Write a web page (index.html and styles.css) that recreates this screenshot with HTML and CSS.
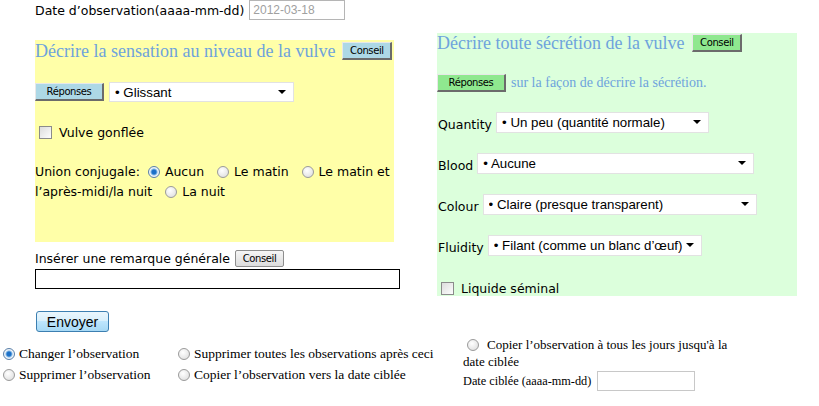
FILE: index.html
```html
<!DOCTYPE html>
<html lang="fr">
<head>
<meta charset="utf-8">
<title>Observation</title>
<link rel="stylesheet" href="styles.css">
</head>
<body>
<div class="top">
  <div class="left">
    <div class="date-row">
      <span class="lbl">Date d’observation(aaaa-mm-dd)</span>
      <input class="date-in" type="text" value="2012-03-18" readonly>
    </div>
    <div class="panel yellow">
      <div class="head-row">
        <span class="heading">Décrire la sensation au niveau de la vulve</span>
        <button class="btn blue conseil">Conseil</button>
      </div>
      <div class="rep-row">
        <button class="btn blue rep">Réponses</button>
        <span class="sel w185"><select><option>• Glissant</option></select><i class="arrow"></i></span>
      </div>
      <label class="check-row"><input type="checkbox" class="cb"><span>Vulve gonflée</span></label>
      <div class="union"><span class="ul">Union conjugale:</span> <span class="ro"><input type="radio" class="rd" checked><span>Aucun</span></span> <span class="ro"><input type="radio" class="rd"><span>Le matin</span></span> <span class="ro"><input type="radio" class="rd"><span>Le matin et</span></span> <span class="ro">l’après-midi/la nuit</span> <span class="ro"><input type="radio" class="rd"><span>La nuit</span></span></div>
    </div>
    <div class="remark-row">
      <span class="lbl">Insérer une remarque générale</span>
      <button class="btn gray">Conseil</button>
    </div>
    <input class="remark" type="text">
    <button class="envoyer">Envoyer</button>
  </div>
  <div class="right">
    <div class="panel green">
      <div class="head-row g">
        <span class="heading">Décrire toute sécrétion de la vulve</span>
        <button class="btn lg conseil">Conseil</button>
      </div>
      <div class="rep-row g">
        <button class="btn lg rep">Réponses</button>
        <span class="hint">sur la façon de décrire la sécrétion.</span>
      </div>
      <div class="field"><span class="lbl">Quantity</span><span class="sel w213"><select><option>• Un peu (quantité normale)</option></select><i class="arrow"></i></span></div>
      <div class="field"><span class="lbl">Blood</span><span class="sel w277"><select><option>• Aucune</option></select><i class="arrow"></i></span></div>
      <div class="field"><span class="lbl">Colour</span><span class="sel w274"><select><option>• Claire (presque transparent)</option></select><i class="arrow"></i></span></div>
      <div class="field"><span class="lbl">Fluidity</span><span class="sel w214"><select><option>• Filant (comme un blanc d’œuf)</option></select><i class="arrow"></i></span></div>
      <label class="check-row g"><input type="checkbox" class="cb"><span>Liquide séminal</span></label>
    </div>
  </div>
</div>
<div class="actions">
  <div class="col c1">
    <label class="opt"><input type="radio" class="rd" checked>Changer l’observation</label>
    <label class="opt"><input type="radio" class="rd">Supprimer l’observation</label>
  </div>
  <div class="col c2">
    <label class="opt"><input type="radio" class="rd">Supprimer toutes les observations après ceci</label>
    <label class="opt"><input type="radio" class="rd">Copier l’observation vers la date ciblée</label>
  </div>
  <div class="col c3">
    <div class="copy"><span class="l1"><input type="radio" class="rd">Copier l’observation à tous les jours jusqu'à la</span> <span class="l2">date ciblée</span></div>
    <div class="target">Date ciblée (aaaa-mm-dd) <input class="date-in t" type="text"></div>
  </div>
</div>
</body>
</html>
```
FILE: styles.css
```css
html, body { margin: 0; padding: 0; background: #fff; }
body { font-family: "DejaVu Sans", Verdana, sans-serif; font-size: 12.5px; color: #000; }

.top { display: flex; align-items: flex-start; }
.left { margin-left: 35px; width: 365px; }
.right { margin-left: 37px; padding-top: 33px; }

.lbl { font-family: "DejaVu Sans", Verdana, sans-serif; font-size: 12.5px; }

.date-row { display: flex; align-items: center; height: 20px; gap: 5px; }
.date-in { box-sizing: border-box; width: 96px; height: 20px; border: 1px solid #b5b5b5; padding: 0 3px; font-family: "Liberation Sans", Arial, sans-serif; font-size: 12px; color: #a0a0a0; outline: none; margin: 0; }

.panel { box-sizing: border-box; }
.yellow { background: #ffffa8; width: 359px; height: 202px; margin-top: 20px; padding-top: 2px; }
.green { background: #dcffdc; width: 360px; height: 263px; padding-top: 1px; }

.head-row { display: flex; align-items: center; height: 18px; gap: 7px; }
.head-row.g { gap: 8px; }
.heading { font-family: "Liberation Serif", "Times New Roman", serif; font-size: 18px; color: #6ea3dc; white-space: nowrap; }

.btn { box-sizing: border-box; font-family: "DejaVu Sans", Tahoma, sans-serif; font-size: 10px; letter-spacing: -0.4px; margin: 0; padding: 0; border-style: solid; border-width: 1px 2px 2px 1px; border-color: #e8e8e8 #6b6b6b #6b6b6b #e8e8e8; color: #000; }
.btn.blue { background: #add8e6; }
.btn.lg { background: #8fe88f; }
.conseil { width: 50px; height: 18px; }
.rep { width: 69px; height: 18px; }
.btn.gray { width: 49px; height: 17px; border: 1px solid #8e8e8e; border-radius: 2px; background: linear-gradient(#f6f6f6, #dcdcdc); }

.rep-row { display: flex; align-items: center; gap: 5px; margin-top: 22px; height: 20px; }
.rep-row.g { margin-top: 22px; height: 18px; }
.hint { font-family: "Liberation Serif", "Times New Roman", serif; font-size: 14px; color: #6ea3dc; }

.field { display: flex; align-items: center; gap: 4px; margin-top: 20px; height: 21px; padding-left: 1px; }
.field .lbl { padding-top: 4px; }

.sel { position: relative; display: inline-block; height: 21px; }
.sel select { appearance: none; -webkit-appearance: none; box-sizing: border-box; width: 100%; height: 100%; border: 1px solid #e2e2e2; background: #fff; font-family: "Liberation Sans", Arial, sans-serif; font-size: 13.3px; color: #000; padding: 0 0 0 5px; margin: 0; border-radius: 0; outline: none; }
.arrow { position: absolute; right: 8px; top: 8px; width: 0; height: 0; border-left: 4px solid transparent; border-right: 4px solid transparent; border-top: 4px solid #000; }
.w185 { width: 185px; height: 20px; }
.w213 { width: 213px; }
.w277 { width: 277px; }
.w274 { width: 274px; }
.w214 { width: 214px; }

.check-row { display: flex; align-items: center; gap: 7px; margin-top: 22px; padding-left: 4px; height: 16px; }
.check-row.g { margin-top: 24px; padding-left: 4px; }
.cb { appearance: none; -webkit-appearance: none; width: 13px; height: 13px; margin: 0; border: 1px solid #8b8b8b; background: linear-gradient(135deg, #dcdcdc, #fdfdfd); box-sizing: border-box; }

.union { margin-top: 22px; line-height: 20px; }
.ro { white-space: nowrap; }
.union .rd { margin: 0 5px 0 9px; }
.union .ro:nth-child(2) .rd { margin-left: 4px; }
.rd { appearance: none; -webkit-appearance: none; width: 12px; height: 12px; margin: 0 6px 0 0; border-radius: 50%; border: 1px solid #9a9a9a; background: radial-gradient(circle at 40% 35%, #fff, #dadada); box-sizing: border-box; vertical-align: -2px; }
.rd:checked { background: radial-gradient(circle, #1c70c8 0 2px, #7fb6e6 3px, #eef4fa 4px); border-color: #5a7fa8; }

.remark-row { display: flex; align-items: center; gap: 5px; margin-top: 8px; height: 17px; }
.remark { box-sizing: border-box; display: block; width: 365px; height: 20px; border: 1px solid #000; margin: 2px 0 0; padding: 0; outline: none; }
.envoyer { display: block; box-sizing: border-box; width: 73px; height: 21px; margin: 22px 0 0 1px; padding: 0; font-family: "Liberation Sans", Arial, sans-serif; font-size: 14px; border: 1px solid #3c7fb1; border-radius: 3px; background: linear-gradient(#eaf6fd, #d9f0fc 45%, #bee6fd 50%, #a7d9f5); color: #000; }

.actions { display: flex; align-items: center; margin-top: 4px; font-family: "Liberation Serif", "Times New Roman", serif; font-size: 13.5px; }
.col { display: flex; flex-direction: column; }
.c1 { width: 175px; padding-left: 3px; box-sizing: border-box; gap: 6px; }
.c2 { width: 288px; padding-left: 3px; box-sizing: border-box; gap: 6px; }
.c3 { width: 290px; font-size: 13px; }
.opt { display: flex; align-items: center; height: 15px; white-space: nowrap; }
.opt .rd { margin-right: 4px; }
.copy { line-height: 17px; width: 280px; }
.copy .l1 { white-space: nowrap; padding-left: 4px; }
.copy .rd { margin-right: 8px; }
.target { display: flex; align-items: center; gap: 6px; height: 22px; font-size: 12.3px; }
.date-in.t { width: 98px; border-color: #c8c8c8; }
```
